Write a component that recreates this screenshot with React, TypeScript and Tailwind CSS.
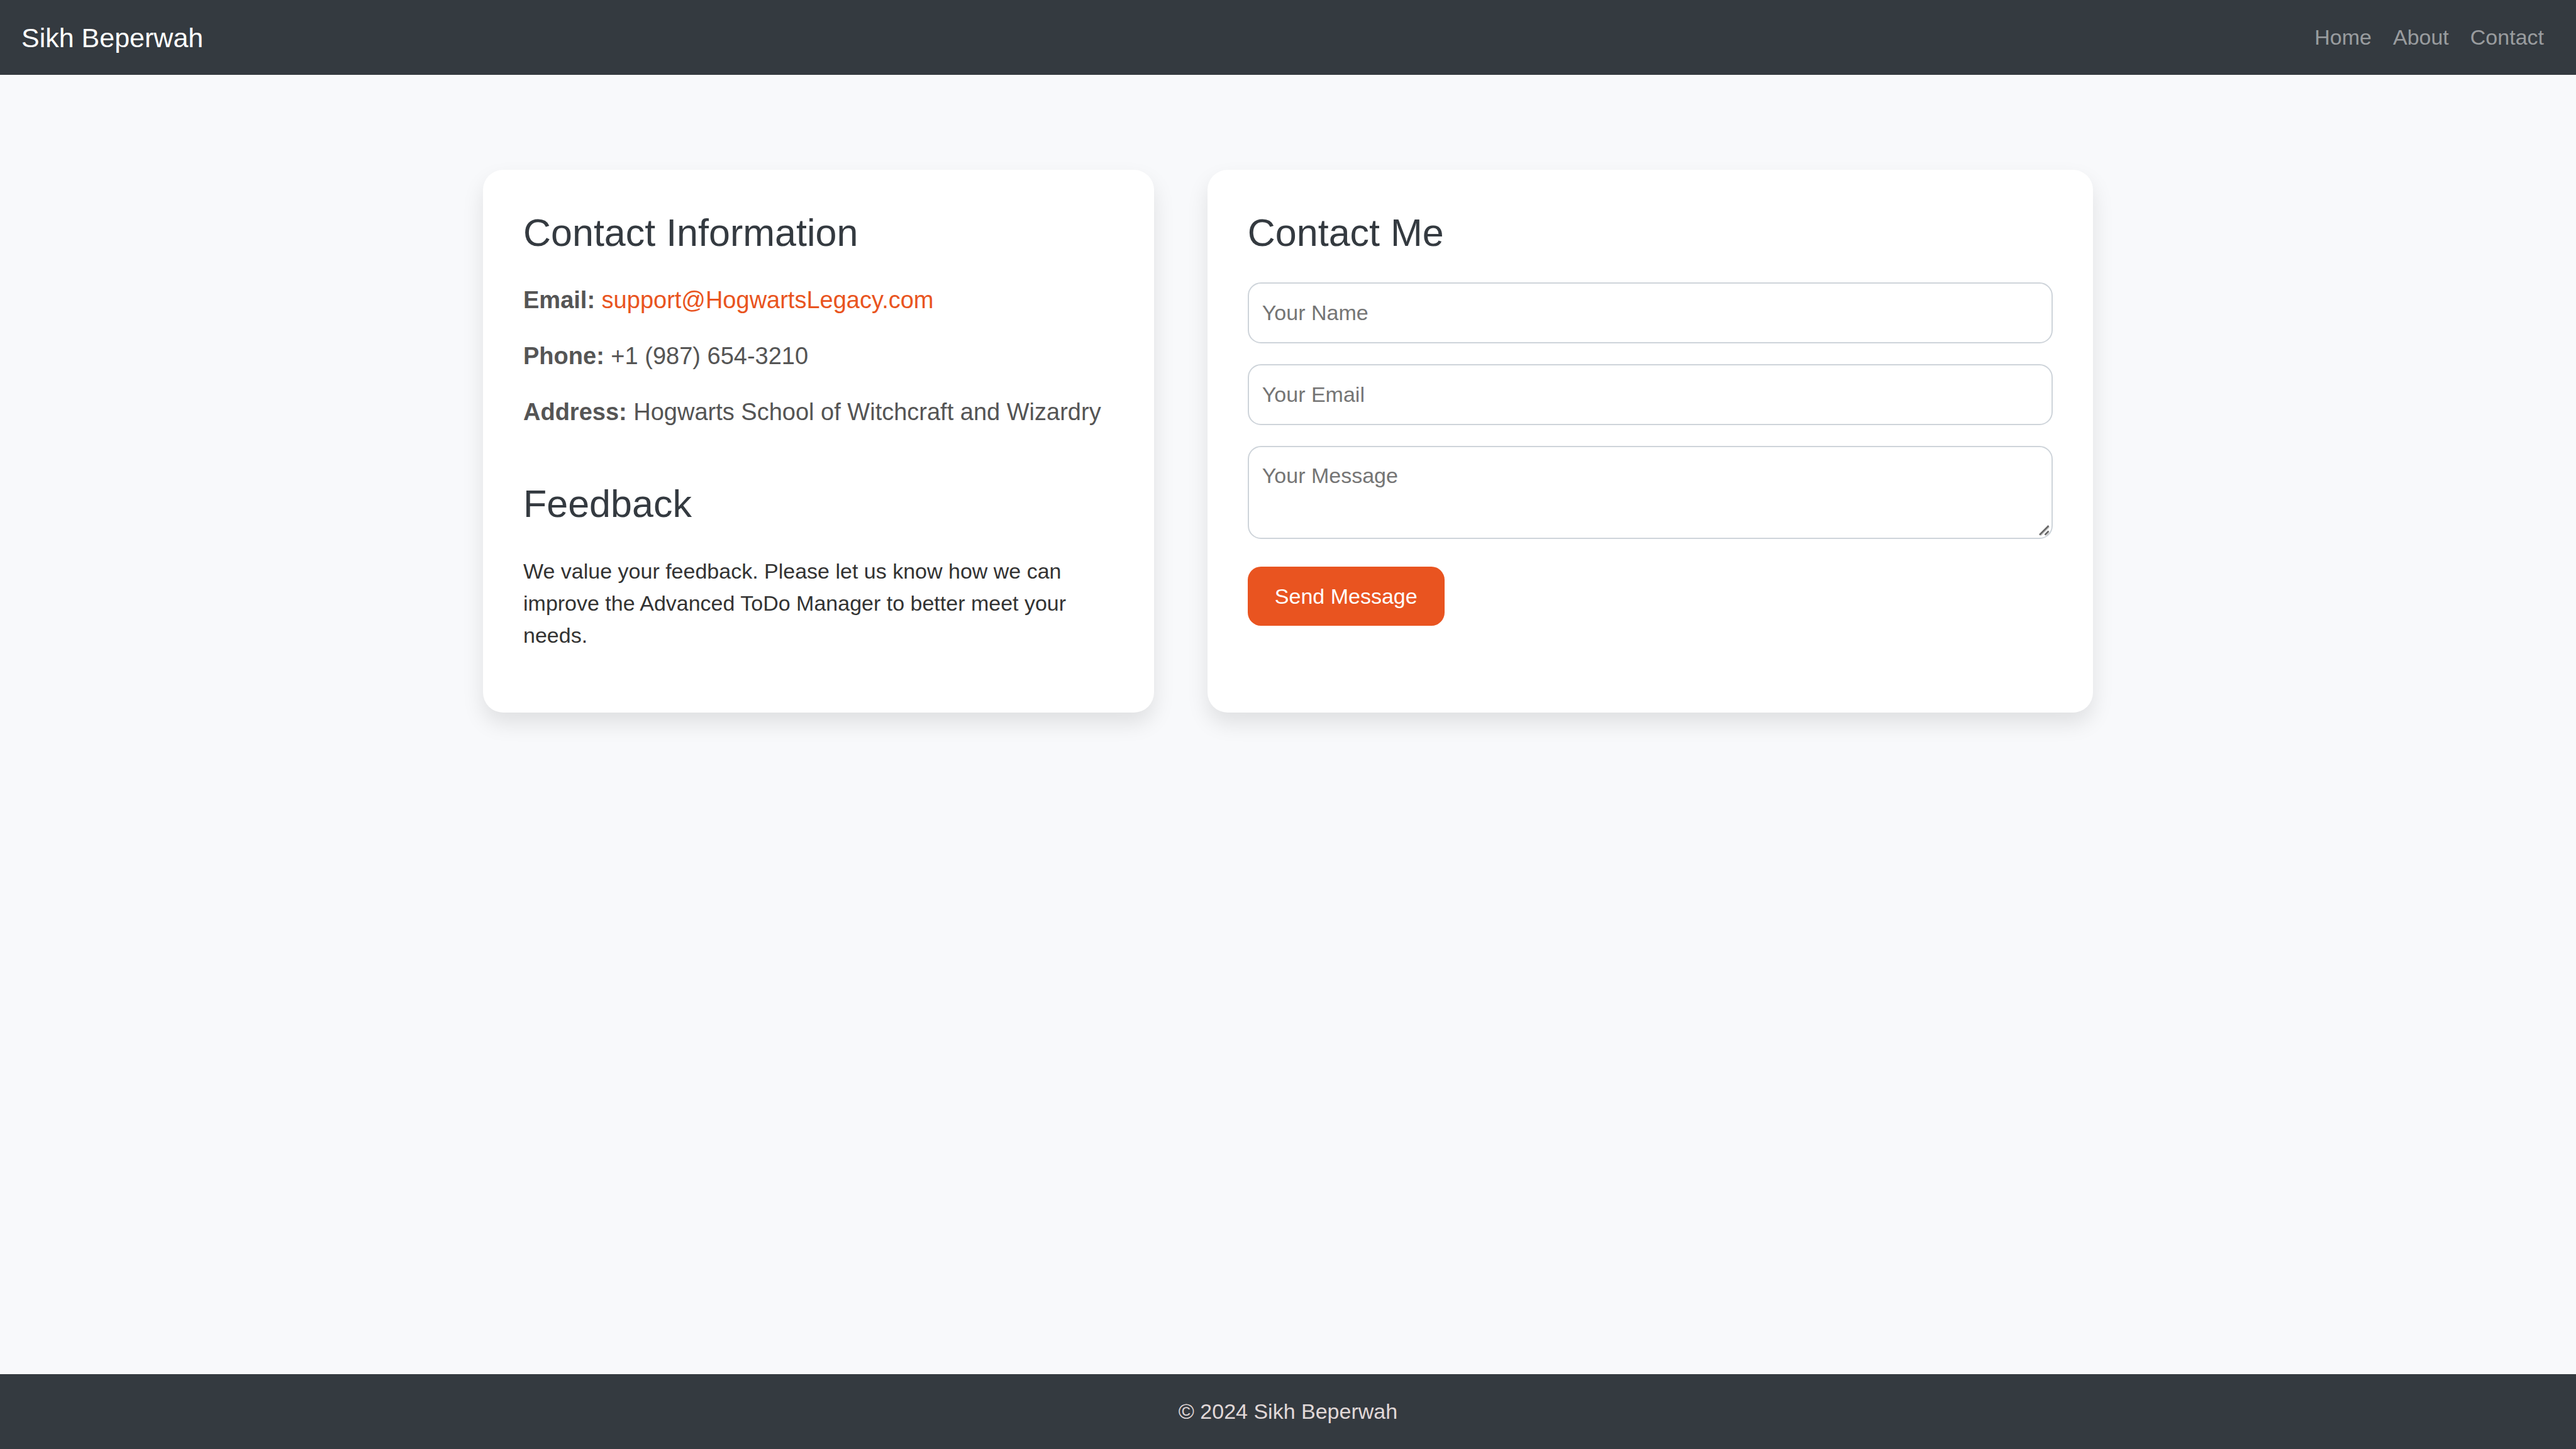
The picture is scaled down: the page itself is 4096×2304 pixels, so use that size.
import type { ReactNode } from "react";

const NAV_LINKS = ["Home", "About", "Contact"];

const FIELD =
  "block w-full rounded-[21px] border-2 border-[#ced4da] bg-white px-[21px] text-[34px] leading-[51px] text-[#495057] placeholder:text-[#757575] placeholder:opacity-100 focus:outline-none";

function Card({ children }: { children: ReactNode }) {
  return (
    <section className="rounded-[32px] bg-white p-16 shadow-[0_17px_34px_rgba(0,0,0,0.1)]">
      {children}
    </section>
  );
}

function Heading({ children }: { children: ReactNode }) {
  return <h2 className="text-[61px] leading-[72px] text-[#343a40]">{children}</h2>;
}

function ContactLine({ label, children }: { label: string; children: ReactNode }) {
  return (
    <p>
      <strong className="font-bold">{label}:</strong> {children}
    </p>
  );
}

function ResizeGrip() {
  return (
    <svg
      viewBox="0 0 17 17"
      className="pointer-events-none absolute right-[5px] bottom-[5px] size-[17px]"
      fill="none"
      aria-hidden="true"
    >
      <path d="M3 16.5 16.5 3M12 16.5 16.5 12" stroke="#c8c8c8" strokeWidth="1.5" />
      <path d="M1 15.5 15.5 1M9.5 15.5 15.5 9.5" stroke="#666" strokeWidth="2.6" />
    </svg>
  );
}

export default function App() {
  return (
    <div className="flex min-h-screen flex-col bg-[#f8f9fb] font-['Liberation_Sans',Arial,sans-serif] text-[34px] leading-[51px] text-[#333]">
      <header className="flex h-[119px] items-center justify-between bg-[#343a40] pr-[51px] pl-[34px]">
        <a href="#" className="text-[43px] leading-[64px] text-white">
          Sikh Beperwah
        </a>
        <nav className="flex gap-[34px]">
          {NAV_LINKS.map((name) => (
            <a key={name} href="#" className="text-white/50">
              {name}
            </a>
          ))}
        </nav>
      </header>

      <main className="flex-1 pt-[151px]">
        <div className="mx-auto grid w-full max-w-[2560px] grid-cols-[25fr_33fr] gap-[85px]">
          <Card>
            <Heading>Contact Information</Heading>
            <div className="mt-[46px] flex flex-col gap-[38px] text-[38px] text-[#555]">
              <ContactLine label="Email">
                <a href="mailto:support@HogwartsLegacy.com" className="text-[#e95420]">
                  support@HogwartsLegacy.com
                </a>
              </ContactLine>
              <ContactLine label="Phone">+1 (987) 654-3210</ContactLine>
              <ContactLine label="Address">Hogwarts School of Witchcraft and Wizardry</ContactLine>
            </div>
            <div className="mt-[84px] mb-[33px]">
              <Heading>Feedback</Heading>
              <p className="mt-[46px]">
                We value your feedback. Please let us know how we can improve the Advanced ToDo
                Manager to better meet your needs.
              </p>
            </div>
          </Card>

          <Card>
            <Heading>Contact Me</Heading>
            <form className="mt-[43px] flex flex-col gap-[33px]" onSubmit={(e) => e.preventDefault()}>
              <input type="text" aria-label="Your Name" placeholder="Your Name" className={`${FIELD} h-[97px]`} />
              <input type="email" aria-label="Your Email" placeholder="Your Email" className={`${FIELD} h-[97px]`} />
              <div className="relative">
                <textarea
                  aria-label="Your Message"
                  placeholder="Your Message"
                  className={`${FIELD} h-[148px] resize-none py-5`}
                />
                <ResizeGrip />
              </div>
              <button
                type="submit"
                className="mt-[11px] h-[94px] self-start rounded-[21px] bg-[#e95420] px-[43px] text-white"
              >
                Send Message
              </button>
            </form>
          </Card>
        </div>
      </main>

      <footer className="flex h-[119px] items-center justify-center bg-[#343a40] text-[#e0d8d8]">
        <p>© 2024 Sikh Beperwah</p>
      </footer>
    </div>
  );
}
